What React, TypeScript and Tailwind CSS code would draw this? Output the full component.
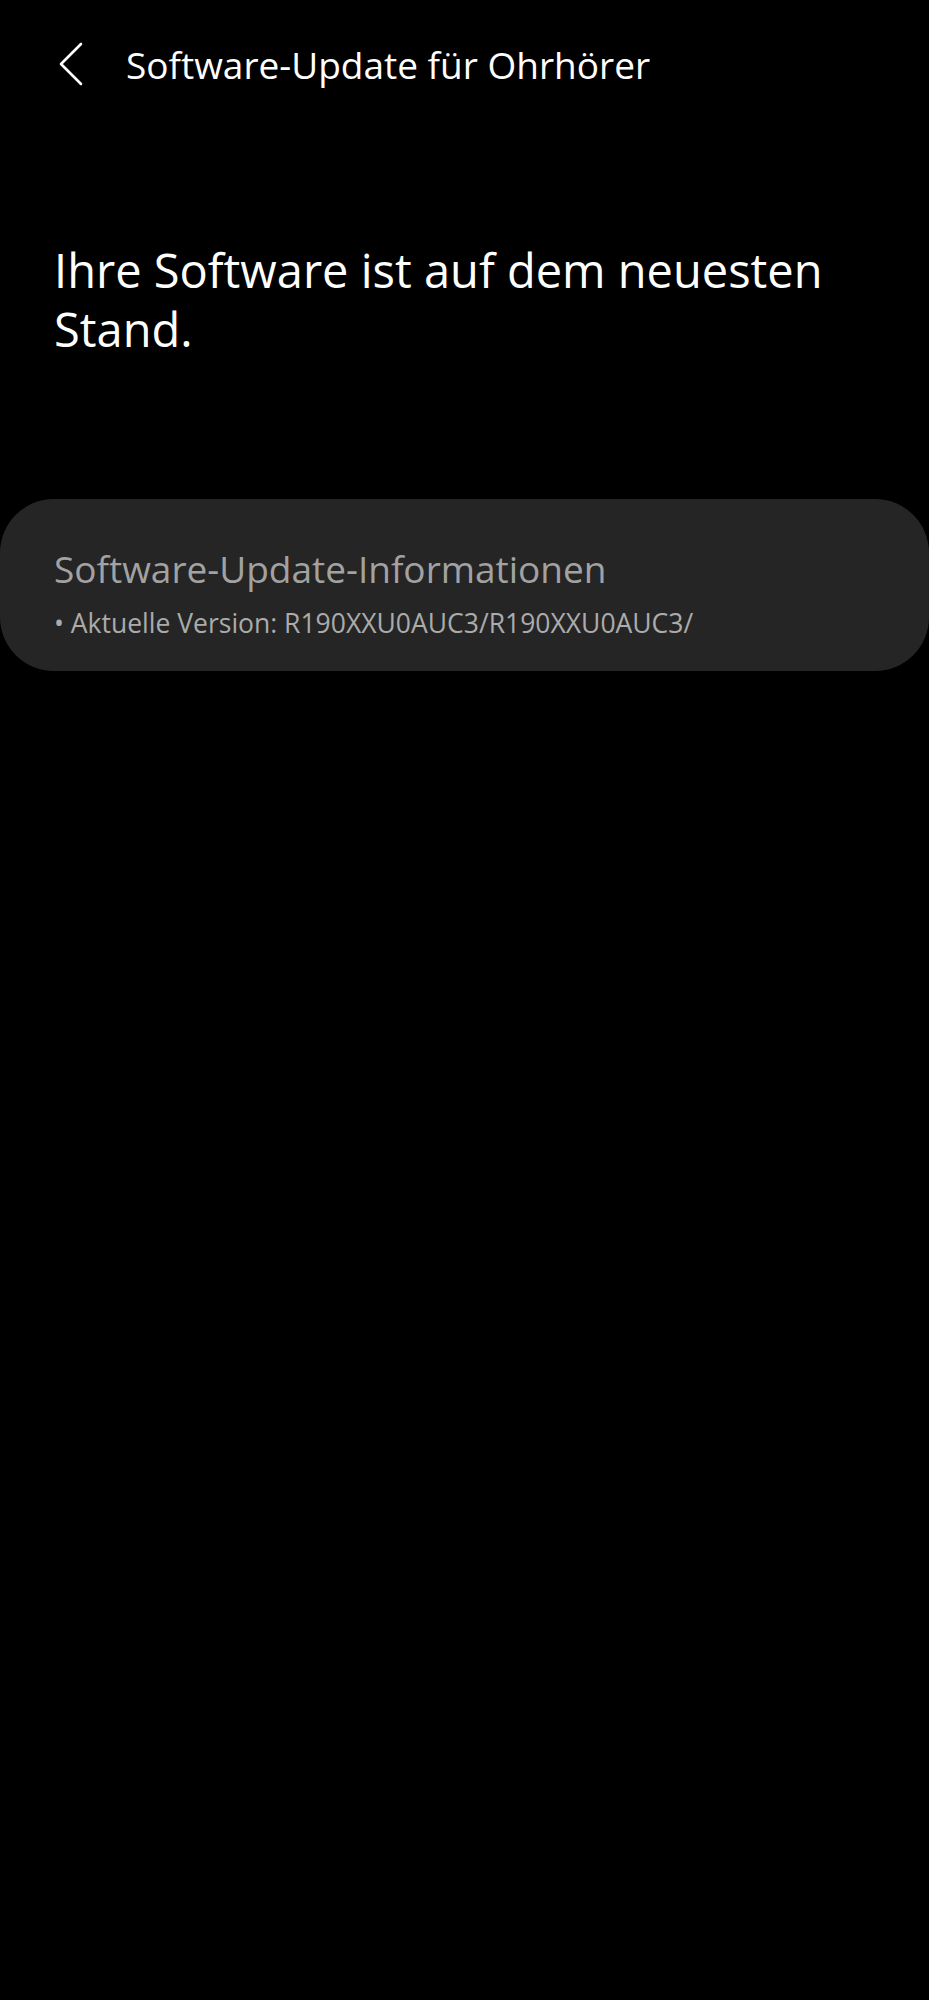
import React from "react";

const font = { fontFamily: '"Open Sans", "Noto Sans", sans-serif' };

function BackChevron() {
  return (
    <svg width="26" height="44" viewBox="0 0 26 44" fill="none" aria-hidden="true">
      <path d="M23 2 L3 22 L23 42" stroke="#ffffff" strokeWidth="2.6" strokeLinecap="round" strokeLinejoin="round" />
    </svg>
  );
}

export default function App() {
  return (
    <div className="min-h-[2000px] w-full bg-black text-white" style={font}>
      <header className="flex h-[128px] items-center pl-[58px]">
        <BackChevron />
        <h1 className="ml-[42px] text-[37px] font-normal leading-none text-white">
          Software-Update für Ohrhörer
        </h1>
      </header>

      <section className="px-[54px] pt-[113px]">
        <p className="text-[47px] leading-[59px] text-white">
          Ihre Software ist auf dem neuesten Stand.
        </p>
      </section>

      <section className="mt-[140px] h-[172px] rounded-[54px] bg-[#252525] px-[54px] pt-[48px]">
        <h2 className="text-[37px] font-medium leading-[44px] text-[#a2a2a2]">
          Software-Update-Informationen
        </h2>
        <p className="mt-[16px] text-[26.5px] leading-[32px] text-[#ababab]">
          • Aktuelle Version: R190XXU0AUC3/R190XXU0AUC3/
        </p>
      </section>
    </div>
  );
}
